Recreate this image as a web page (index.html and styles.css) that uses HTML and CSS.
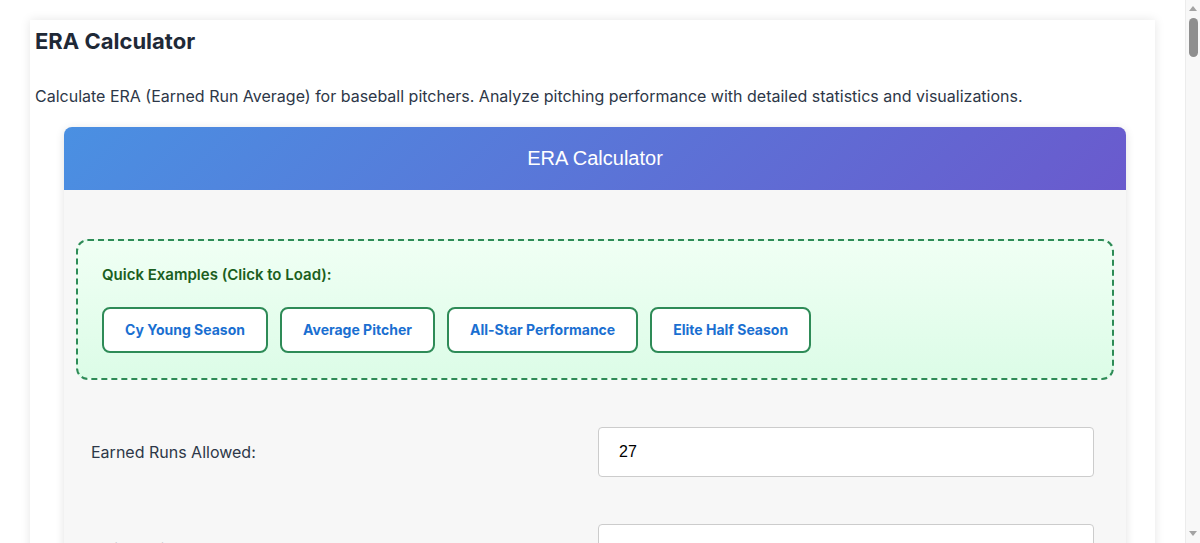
FILE: index.html
```html
<!DOCTYPE html>
<html lang="en">
<head>
<meta charset="utf-8">
<title>ERA Calculator</title>
<link rel="stylesheet" href="styles.css">
</head>
<body>
<main class="page-card">
  <h1 class="page-title">ERA Calculator</h1>
  <p class="page-intro">Calculate ERA (Earned Run Average) for baseball pitchers. Analyze pitching performance with detailed statistics and visualizations.</p>
  <section class="calc">
    <header class="calc-header">ERA Calculator</header>
    <div class="calc-body">
      <div class="examples">
        <div class="examples-title">Quick Examples (Click to Load):</div>
        <div class="examples-list">
          <button class="example-btn" type="button">Cy Young Season</button>
          <button class="example-btn" type="button">Average Pitcher</button>
          <button class="example-btn" type="button">All-Star Performance</button>
          <button class="example-btn" type="button">Elite Half Season</button>
        </div>
      </div>
      <div class="form">
        <div class="form-row">
          <label class="form-label" for="er">Earned Runs Allowed:</label>
          <input class="form-input" id="er" type="text" value="27">
        </div>
        <div class="form-row">
          <label class="form-label" for="ip">Innings Pitched:</label>
          <input class="form-input" id="ip" type="text" value="">
        </div>
        <div class="form-row">
          <label class="form-label" for="gs">Games Started:</label>
          <input class="form-input" id="gs" type="text" value="">
        </div>
        <div class="form-row">
          <label class="form-label" for="ha">Hits Allowed:</label>
          <input class="form-input" id="ha" type="text" value="">
        </div>
        <div class="form-row">
          <label class="form-label" for="bb">Walks Allowed:</label>
          <input class="form-input" id="bb" type="text" value="">
        </div>
      </div>
      <div class="results"></div>
    </div>
  </section>
</main>
<div class="scrollbar" aria-hidden="true">
  <span class="scroll-arrow scroll-up"></span>
  <span class="scroll-thumb"></span>
  <span class="scroll-arrow scroll-down"></span>
</div>
</body>
</html>
```

FILE: styles.css
```css
html, body {
  margin: 0;
  padding: 0;
  background: #ffffff;
}

body {
  padding-right: 15px;
  font-family: Inter, "Noto Sans", sans-serif;
  color: #1f2937;
}

.page-card {
  margin: 20px 30px;
  padding: 5px 5px 40px;
  background: #ffffff;
  box-shadow: 0 0 10px rgba(0, 0, 0, 0.1);
}

.page-title {
  margin: 2px 0 0;
  font-size: 22px;
  line-height: 28px;
  font-weight: 700;
  color: #1f2937;
}

.page-intro {
  margin: 29px 0 0;
  font-size: 16px;
  line-height: 24px;
  color: #2d3748;
}

.calc {
  width: 1062px;
  margin: 19px 0 0 29px;
  border-radius: 8px 8px 0 0;
  box-shadow: 0 2px 10px rgba(0, 0, 0, 0.12);
  background: #f7f7f7;
}

.calc-header {
  height: 63px;
  display: flex;
  align-items: center;
  justify-content: center;
  border-radius: 8px 8px 0 0;
  background: linear-gradient(135deg, #4a90e2, #6a5acd);
  color: #ffffff;
  font-family: "Liberation Sans", Arial, sans-serif;
  font-size: 20px;
}

.calc-body {
  padding: 49px 12px 40px;
}

.examples {
  border: 2px dashed #2e8b57;
  border-radius: 12px;
  padding: 24px 24px 25px;
  background: linear-gradient(180deg, #f0fff4, #dcfce7);
}

.examples-title {
  font-size: 15px;
  line-height: 20px;
  font-weight: 600;
  color: #1b5e20;
  margin-bottom: 22px;
}

.examples-list {
  display: flex;
  gap: 12px;
}

.example-btn {
  background: #ffffff;
  border: 2px solid #2e8b57;
  border-radius: 8px;
  padding: 12px 21px;
  font-family: Inter, "Noto Sans", sans-serif;
  font-size: 14px;
  line-height: 18px;
  font-weight: 700;
  color: #1a6fd1;
}

.form {
  margin-top: 47px;
  padding: 0 20px 0 15px;
  display: flex;
  flex-direction: column;
  gap: 47px;
}

.form-row {
  display: grid;
  grid-template-columns: 1fr 496px;
  gap: 10px;
  align-items: center;
}

.form-label {
  font-size: 16px;
  color: #2d3748;
}

.form-input {
  box-sizing: border-box;
  height: 50px;
  padding: 15px 20px;
  border: 1px solid #cccccc;
  border-radius: 4px;
  background: #ffffff;
  font-family: "Liberation Sans", Arial, sans-serif;
  font-size: 16px;
  color: #000000;
}

.results {
  min-height: 6000px;
}

.scrollbar {
  position: fixed;
  top: 0;
  right: 0;
  width: 15px;
  height: 100%;
  background: #f8f8f8;
  border-left: 1px solid #ececec;
  box-sizing: border-box;
}

.scroll-arrow {
  position: absolute;
  left: 3px;
  width: 0;
  height: 0;
  border-left: 4.5px solid transparent;
  border-right: 4.5px solid transparent;
}

.scroll-up {
  top: 6px;
  border-bottom: 5px solid #a3a3a3;
}

.scroll-down {
  bottom: 7px;
  border-top: 5px solid #a3a3a3;
}

.scroll-thumb {
  position: absolute;
  top: 18px;
  left: 3px;
  width: 9px;
  height: 39px;
  border-radius: 4.5px;
  background: #8f8f8f;
}
```
